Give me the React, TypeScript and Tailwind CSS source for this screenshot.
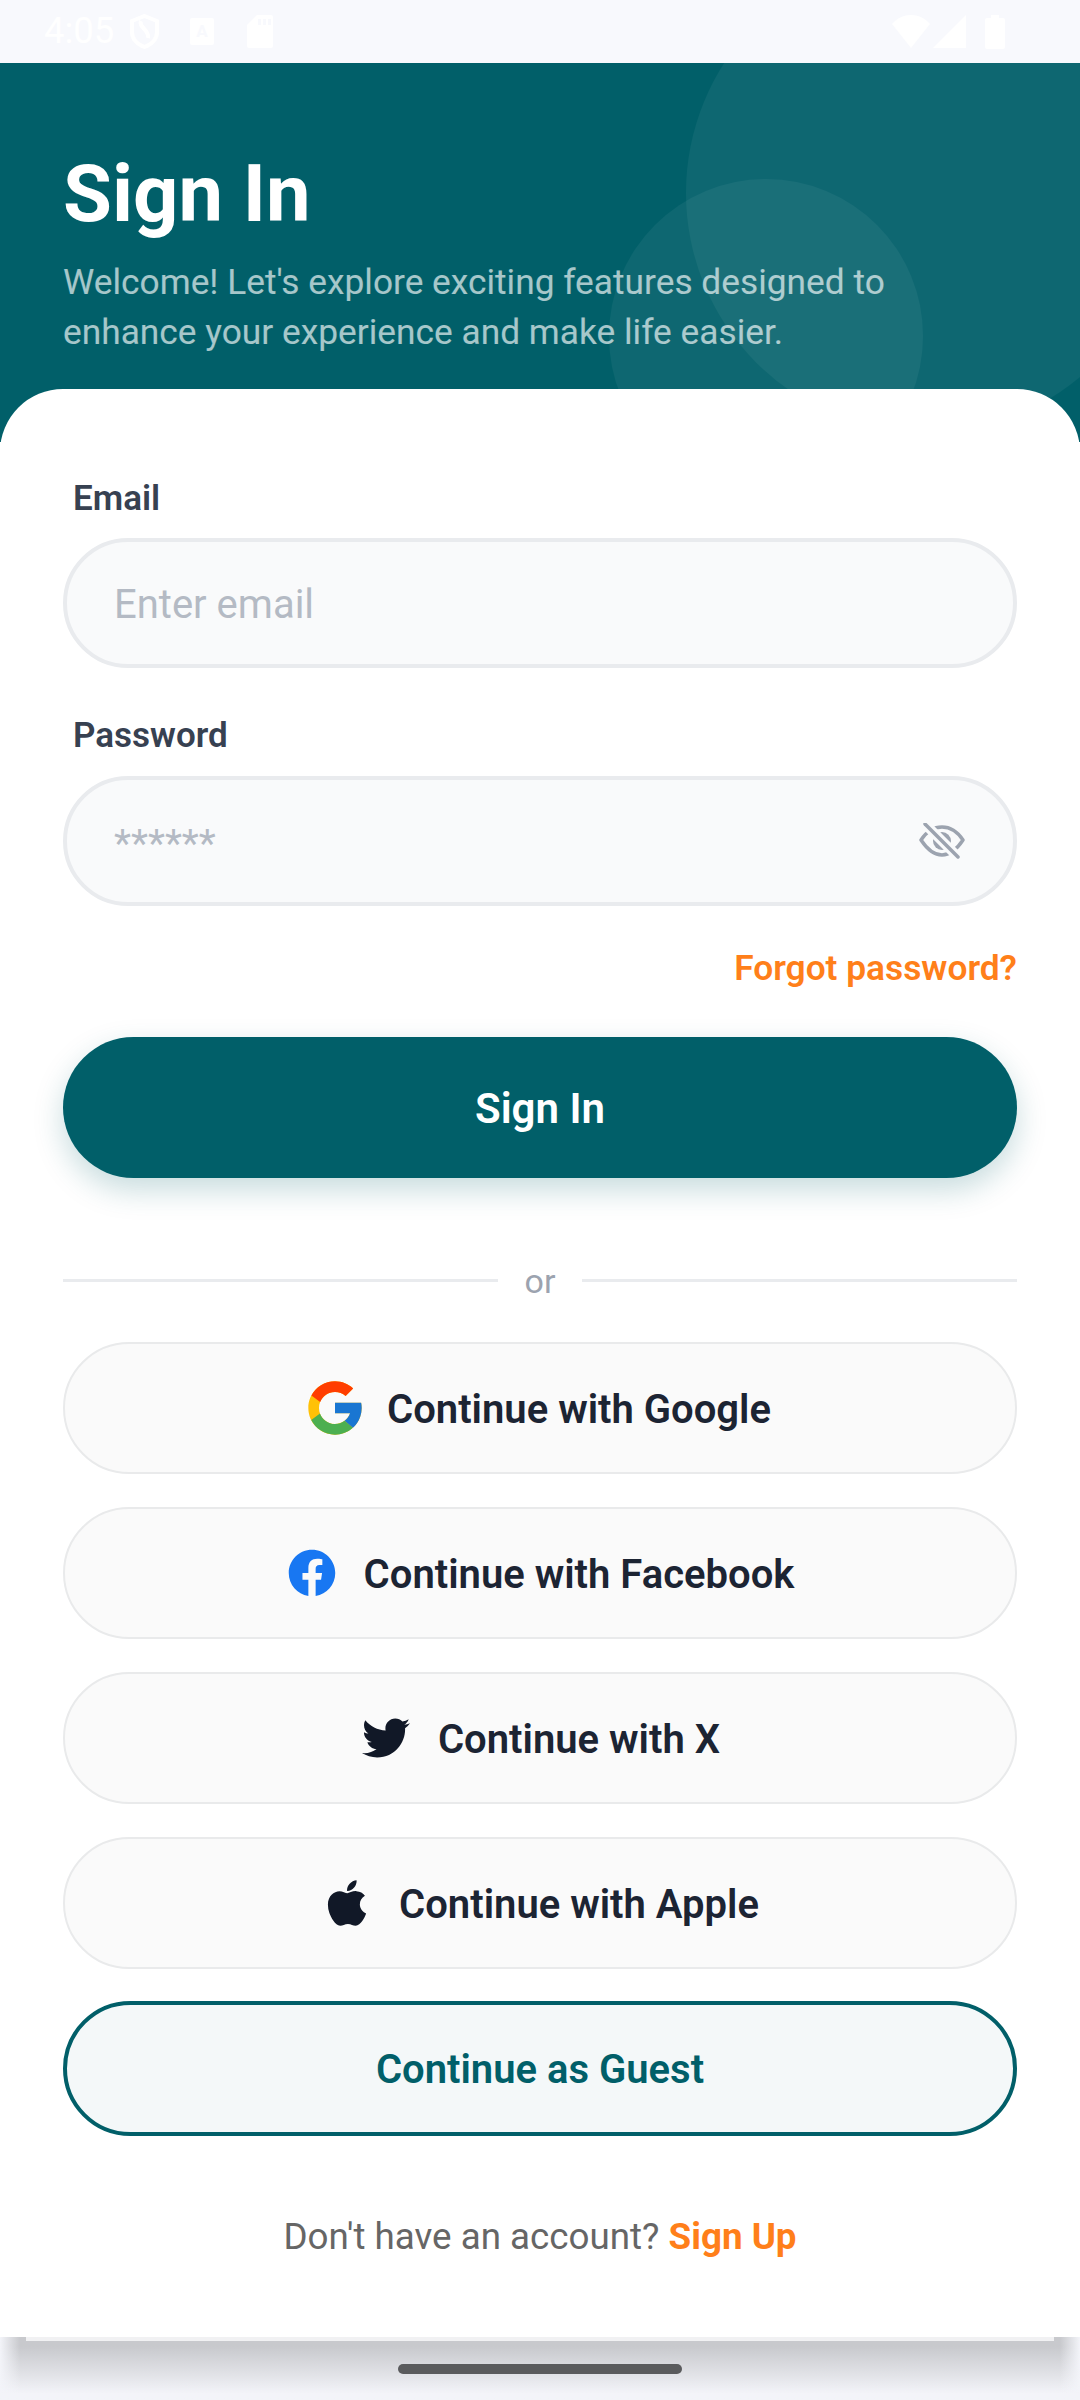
import type { ReactNode } from "react";
import { FaApple, FaFacebook, FaTwitter } from "react-icons/fa";
import { FcGoogle } from "react-icons/fc";

function SocialButton({ icon, label }: { icon: ReactNode; label: string }) {
  return (
    <div className="flex h-[132px] items-center justify-center gap-[26px] rounded-full border-[2px] border-[#e9eaeb] bg-[#fafafa] text-[40px] font-semibold text-[#1c2433]">
      <span className="flex w-[52px] shrink-0 items-center justify-center">{icon}</span>
      <span className="pt-[3px]">{label}</span>
    </div>
  );
}

function EyeOff() {
  return (
    <svg className="h-[36px] w-[46px]" viewBox="0 0 46 36" fill="none">
      <path
        d="M2 17C8 8 15 4 23 4s15 4 21 13c-6 9-13 15-21 15S8 26 2 17z"
        stroke="#9ca3af"
        strokeWidth="3.5"
        strokeLinejoin="round"
      />
      <circle cx="23" cy="18" r="9" fill="#9ca3af" />
      <path d="M6 1l33 33" stroke="#f9fafb" strokeWidth="10" />
      <path d="M6 1l33 33" stroke="#9ca3af" strokeWidth="3.5" strokeLinecap="round" />
    </svg>
  );
}

export default function App() {
  return (
    <div className="relative h-[2400px] w-[1080px] overflow-hidden bg-white font-['Roboto',sans-serif]">
      <div className="flex h-[63px] items-center bg-[#f8f9fd] pl-[44px] text-white">
        <span className="text-[36.5px] leading-none">4:05</span>
        <svg className="ml-[16px] h-[35px] w-[29px]" viewBox="0 0 29 35" fill="none" stroke="#fff" strokeWidth="4">
          <path d="M14.5 2 27 7v11c0 7-5 12-12.5 15C7 30 2 25 2 18V7z" />
          <path d="M11 7c-3 6 9 9 7 17" />
        </svg>
        <svg className="ml-[31px] h-[27px] w-[24px]" viewBox="0 0 24 27">
          <rect width="24" height="27" rx="2" fill="#fff" />
          <text x="12" y="19" textAnchor="middle" fontSize="17" fontWeight="700" fill="#f8f9fd" fontFamily="Roboto, sans-serif">
            A
          </text>
        </svg>
        <svg className="ml-[33px] h-[33px] w-[26px]" viewBox="0 0 26 33">
          <path d="M10 0h14a2 2 0 0 1 2 2v29a2 2 0 0 1-2 2H2a2 2 0 0 1-2-2V10z" fill="#fff" />
          <path d="M11 4h3v6h-3zM16 4h3v6h-3zM21 4h3v6h-3z" fill="#f8f9fd" />
        </svg>
        <svg className="ml-auto h-[33px] w-[38px]" viewBox="0 0 38 33" fill="#fff">
          <path d="M0 9C10-3 28-3 38 9L19 33z" />
        </svg>
        <svg className="ml-[3px] h-[33px] w-[33px]" viewBox="0 0 33 33" fill="#fff">
          <path d="M33 0v33H0z" />
        </svg>
        <svg className="ml-[19px] mr-[75px] h-[34px] w-[20px]" viewBox="0 0 20 34" fill="#fff">
          <path d="M6 0h8v3h4a2 2 0 0 1 2 2v27a2 2 0 0 1-2 2H2a2 2 0 0 1-2-2V5a2 2 0 0 1 2-2h4z" />
        </svg>
      </div>

      <div className="relative h-[379px] overflow-hidden bg-[#015f69] px-[63px] pt-[87px]">
        <div className="absolute left-[686px] top-[-110px] h-[480px] w-[480px] rounded-full bg-white/[0.05]" />
        <div className="absolute left-[609px] top-[116px] h-[314px] w-[314px] rounded-full bg-white/[0.05]" />
        <h1 className="relative text-[79.5px] font-bold leading-[88px] text-white">Sign In</h1>
        <p className="relative mt-[19px] text-[35.3px] leading-[50px] text-white/65">
          Welcome! Let's explore exciting features designed to
          <br />
          enhance your experience and make life easier.
        </p>
      </div>

      <div className="relative mt-[-53px] h-[1948px] rounded-t-[63px] bg-white px-[63px] pt-[90px]">
        <div className="pl-[10px] text-[35px] font-semibold leading-[40px] text-[#374151]">Email</div>
        <div className="mt-[19px] flex h-[130px] items-center rounded-full border-[4px] border-[#e9ebee] bg-[#f9fafb] px-[47px] text-[40px] text-[#b4bac4]">
          <span className="pt-[3px]">Enter email</span>
        </div>
        <div className="mt-[48px] pl-[10px] text-[35px] font-semibold leading-[40px] text-[#374151]">Password</div>
        <div className="mt-[20px] flex h-[130px] items-center justify-between rounded-full border-[4px] border-[#e9ebee] bg-[#f9fafb] pl-[47px] pr-[48px] text-[39.4px] text-[#b4bac4]">
          <span className="pt-[6px] leading-none">******</span>
          <EyeOff />
        </div>
        <div className="mt-[42px] text-right text-[35.3px] font-semibold leading-[40px] text-[#ff7f1a]">Forgot password?</div>
        <div className="mt-[49px] flex h-[141px] items-center justify-center rounded-full bg-[#015f69] pt-[2px] text-[42px] font-semibold text-white shadow-[0_12px_30px_rgba(1,95,105,0.22)]">
          Sign In
        </div>
        <div className="mt-[81px] flex items-center gap-[27px]">
          <div className="h-[3px] flex-1 bg-[#e9ebee]" />
          <span className="pt-[2px] text-[34px] leading-[40px] text-[#9ca3af]">or</span>
          <div className="h-[3px] flex-1 bg-[#e9ebee]" />
        </div>
        <div className="mt-[41px] flex flex-col gap-[33px]">
          <SocialButton icon={<FcGoogle className="h-[64px] w-[64px] shrink-0" />} label="Continue with Google" />
          <SocialButton icon={<FaFacebook className="h-[48px] w-[48px] shrink-0 text-[#1877f2]" />} label="Continue with Facebook" />
          <SocialButton icon={<FaTwitter className="h-[48px] w-[48px] shrink-0 text-[#111827]" />} label="Continue with X" />
          <SocialButton icon={<FaApple className="h-[52px] w-[52px] shrink-0 text-[#111827]" />} label="Continue with Apple" />
        </div>
        <div className="mt-[32px] flex h-[135px] items-center justify-center rounded-full border-[4px] border-[#015f69] bg-[#f4f8f9] pt-[2px] text-[40px] font-semibold text-[#015f69]">
          Continue as Guest
        </div>
        <div className="mt-[79px] text-center text-[36.75px] leading-[44px] text-[#666666]">
          Don't have an account? <span className="font-bold text-[#ff7f1a]">Sign Up</span>
        </div>
      </div>

      <div className="absolute bottom-0 left-0 right-0 h-[63px] bg-gradient-to-b from-[#c8c9cd] from-[15%] to-[#f3f4f9] to-[90%]">
        <div className="mx-auto mt-[27px] h-[10px] w-[284px] rounded-full bg-[#5a5b5d]" />
        <div className="absolute bottom-0 left-0 top-0 w-[20px] bg-gradient-to-r from-[#f3f4f9] to-transparent" />
        <div className="absolute bottom-0 right-0 top-0 w-[20px] bg-gradient-to-l from-[#f3f4f9] to-transparent" />
      </div>
      <div className="absolute left-[26px] right-[26px] top-[2337px] h-[4px] bg-[#f1f1f3]" />
    </div>
  );
}
